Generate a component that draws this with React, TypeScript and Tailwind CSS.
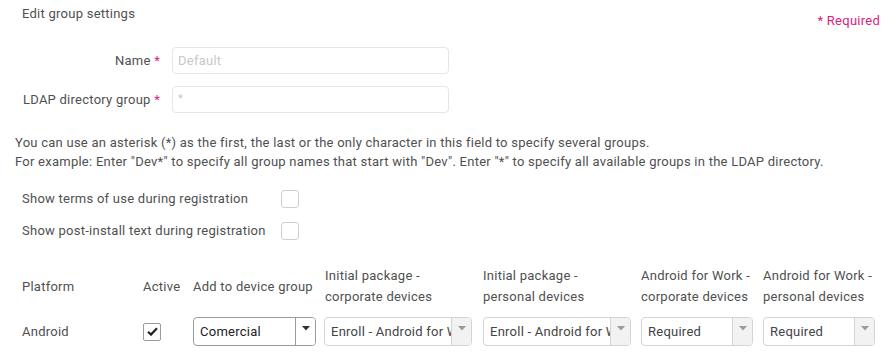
import React from "react";

const Arrow = ({ color }: { color: string }) => (
  <svg width="8" height="5" viewBox="0 0 8 5">
    <path d="M0 0 H8 L4 4.5 Z" fill={color} />
  </svg>
);

function Select({ value, width, active }: { value: string; width: number; active?: boolean }) {
  return (
    <div
      className={`flex h-[29px] rounded-[4px] border bg-white overflow-hidden ${active ? "border-[#9a9a9a]" : "border-[#d4d4d4]"}`}
      style={{ width }}
    >
      <div className={`flex-1 min-w-0 overflow-hidden whitespace-nowrap pl-[6px] flex items-center text-[13px] ${active ? "text-[#222]" : "text-[#444]"}`}>
        {value}
      </div>
      <div
        className={`w-[20px] shrink-0 flex justify-center pt-[8px] border-l ${active ? "border-[#9a9a9a] bg-white" : "border-[#d4d4d4] bg-[#f2f2f2]"}`}
      >
        <Arrow color={active ? "#333" : "#9a9a9a"} />
      </div>
    </div>
  );
}

export default function App() {
  const font = { fontFamily: "Roboto, 'Noto Sans', sans-serif" };
  return (
    <div className="w-[893px] h-[356px] bg-white text-[#505050] tracking-[0.25px] relative overflow-hidden" style={font}>
      <div className="flex justify-between pl-[22px] pr-[13px] pt-[4px]">
        <div className="text-[13px] leading-[19px]">Edit group settings</div>
        <div className="text-[13px] leading-[19px] text-[#e0207e] mt-[7px]">* Required</div>
      </div>

      <div className="flex flex-col gap-[12px] mt-[17px]">
        <div className="flex items-center h-[27px]">
          <div className="w-[160px] text-right text-[13px]">
            Name <span className="text-[#e0207e]">*</span>
          </div>
          <div className="ml-[12px] w-[277px] h-[27px] rounded-[4px] border border-[#e6e6e6] flex items-center px-[5px] text-[13px] text-[#c8c8c8]">
            Default
          </div>
        </div>
        <div className="flex items-center h-[27px]">
          <div className="w-[160px] text-right text-[13px] whitespace-nowrap">
            LDAP directory group <span className="text-[#e0207e]">*</span>
          </div>
          <div className="ml-[12px] w-[277px] h-[27px] rounded-[4px] border border-[#e6e6e6] flex items-center px-[5px] text-[11px] text-[#c8c8c8]">
            *
          </div>
        </div>
      </div>

      <div className="pl-[15px] mt-[20px] text-[13px] leading-[19px]">
        <div>You can use an asterisk (*) as the first, the last or the only character in this field to specify several groups.</div>
        <div>For example: Enter "Dev*" to specify all group names that start with "Dev". Enter "*" to specify all available groups in the LDAP directory.</div>
      </div>

      <div className="pl-[22px] mt-[19px] flex flex-col gap-[14px]">
        <div className="flex items-center h-[18px]">
          <div className="w-[259px] text-[13px]">Show terms of use during registration</div>
          <div className="w-[18px] h-[18px] rounded-[3px] border border-[#cfcfcf]" />
        </div>
        <div className="flex items-center h-[18px]">
          <div className="w-[259px] text-[13px]">Show post-install text during registration</div>
          <div className="w-[18px] h-[18px] rounded-[3px] border border-[#cfcfcf]" />
        </div>
      </div>

      <div className="pl-[22px] mt-[25px] grid grid-cols-[121px_50px_132px_158px_158px_122px_115px] text-[13px] leading-[21px] items-center">
        <div>Platform</div>
        <div>Active</div>
        <div>Add to device group</div>
        <div>Initial package -<br />corporate devices</div>
        <div>Initial package -<br />personal devices</div>
        <div className="whitespace-nowrap">Android for Work -<br />corporate devices</div>
        <div className="whitespace-nowrap">Android for Work -<br />personal devices</div>

        <div className="mt-[10px]">Android</div>
        <div className="mt-[10px]">
          <div className="w-[18px] h-[18px] rounded-[2px] border border-[#9a9a9a] flex items-center justify-center">
            <svg width="11" height="9" viewBox="0 0 11 9">
              <path d="M1 4.8 L4 7.6 L10 1.2" stroke="#222" strokeWidth="2.2" fill="none" />
            </svg>
          </div>
        </div>
        <div className="mt-[10px]"><Select value="Comercial" width={123} active /></div>
        <div className="mt-[10px] -ml-[1px]"><Select value="Enroll - Android for Work" width={148} /></div>
        <div className="mt-[10px]"><Select value="Enroll - Android for Work" width={148} /></div>
        <div className="mt-[10px]"><Select value="Required" width={112} /></div>
        <div className="mt-[10px]"><Select value="Required" width={112} /></div>
      </div>
    </div>
  );
}
